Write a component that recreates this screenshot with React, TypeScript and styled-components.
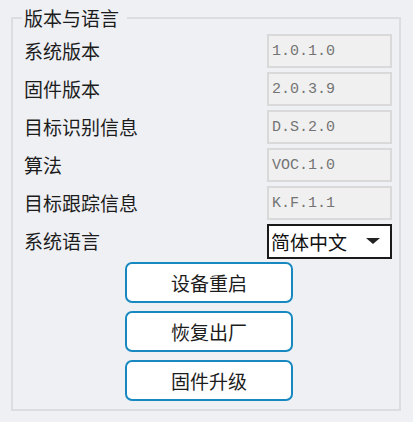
import React from 'react';
import styled, { createGlobalStyle } from 'styled-components';

const GlobalStyle = createGlobalStyle`
    html, body {
        margin: 0;
        padding: 0;
        background: #eff0f4;
        font-family: "Noto Sans CJK SC", "Noto Sans", sans-serif;
    }
`;

// ---------------- <Page /> --------------------------------------

const Page = styled.div`
    width: 413px;
    height: 422px;
    box-sizing: border-box;
    padding: 5px 12px 0 11px;
    background: #eff0f4;
`;

// ---------------- <GroupBox /> --------------------------------------

const GroupBox = styled.fieldset`
    margin: 0;
    width: 390px;
    height: 406px;
    box-sizing: border-box;
    border: 2px solid #dcdde0;
    padding: 3px 7px 0 11px;

    legend {
        padding: 0 8px 0 2px;
        margin-left: -2px;
        font-size: 19px;
        line-height: 26px;
        color: #1c1c1c;
    }
`;

// ---------------- <FieldRow /> --------------------------------------

const FieldRow = styled.div`
    display: flex;
    align-items: center;
    justify-content: space-between;
    height: 34px;
    margin-bottom: 4px;
`;

const Label = styled.span`
    font-size: 19px;
    line-height: 26px;
    color: #1c1c1c;
`;

const ReadonlyBox = styled.div`
    width: 125px;
    height: 34px;
    box-sizing: border-box;
    border: 2px solid #d9d9d9;
    background: #f0f0f0;
    padding: 0 3px;
    display: flex;
    align-items: center;
    font-family: "Liberation Mono", "DejaVu Sans Mono", monospace;
    font-size: 15px;
    color: #747474;
`;

const SelectBox = styled.div`
    width: 125px;
    height: 35px;
    box-sizing: border-box;
    border: 2px solid #1a1a1a;
    background: #ffffff;
    padding: 0 10px 0 2px;
    display: flex;
    align-items: center;
    justify-content: space-between;
    font-size: 19px;
    color: #111;
`;

const Caret = styled.span`
    width: 0;
    height: 0;
    border-left: 7px solid transparent;
    border-right: 7px solid transparent;
    border-top: 6px solid #222;
`;

// ---------------- <ActionList /> --------------------------------------

const ActionList = styled.div`
    display: flex;
    flex-direction: column;
    align-items: center;
    gap: 8px;
    margin-top: 2px;
    padding-left: 2px;
`;

const ActionButton = styled.button`
    width: 168px;
    height: 41px;
    box-sizing: border-box;
    border: 2px solid #1789c0;
    border-radius: 7px;
    background: #ffffff;
    font-family: inherit;
    font-size: 19px;
    color: #1c1c1c;
    padding: 0;
    cursor: pointer;
`;

const fields = [
    { label: '系统版本', value: '1.0.1.0' },
    { label: '固件版本', value: '2.0.3.9' },
    { label: '目标识别信息', value: 'D.S.2.0' },
    { label: '算法', value: 'VOC.1.0' },
    { label: '目标跟踪信息', value: 'K.F.1.1' },
];

const actions = ['设备重启', '恢复出厂', '固件升级'];

export default function App() {
    return (
        <Page>
            <GlobalStyle />
            <GroupBox>
                <legend>版本与语言</legend>
                {fields.map(f => (
                    <FieldRow key={f.label}>
                        <Label>{f.label}</Label>
                        <ReadonlyBox>{f.value}</ReadonlyBox>
                    </FieldRow>
                ))}
                <FieldRow>
                    <Label>系统语言</Label>
                    <SelectBox>
                        <span>简体中文</span>
                        <Caret />
                    </SelectBox>
                </FieldRow>
                <ActionList>
                    {actions.map(a => (
                        <ActionButton key={a}>{a}</ActionButton>
                    ))}
                </ActionList>
            </GroupBox>
        </Page>
    );
}
